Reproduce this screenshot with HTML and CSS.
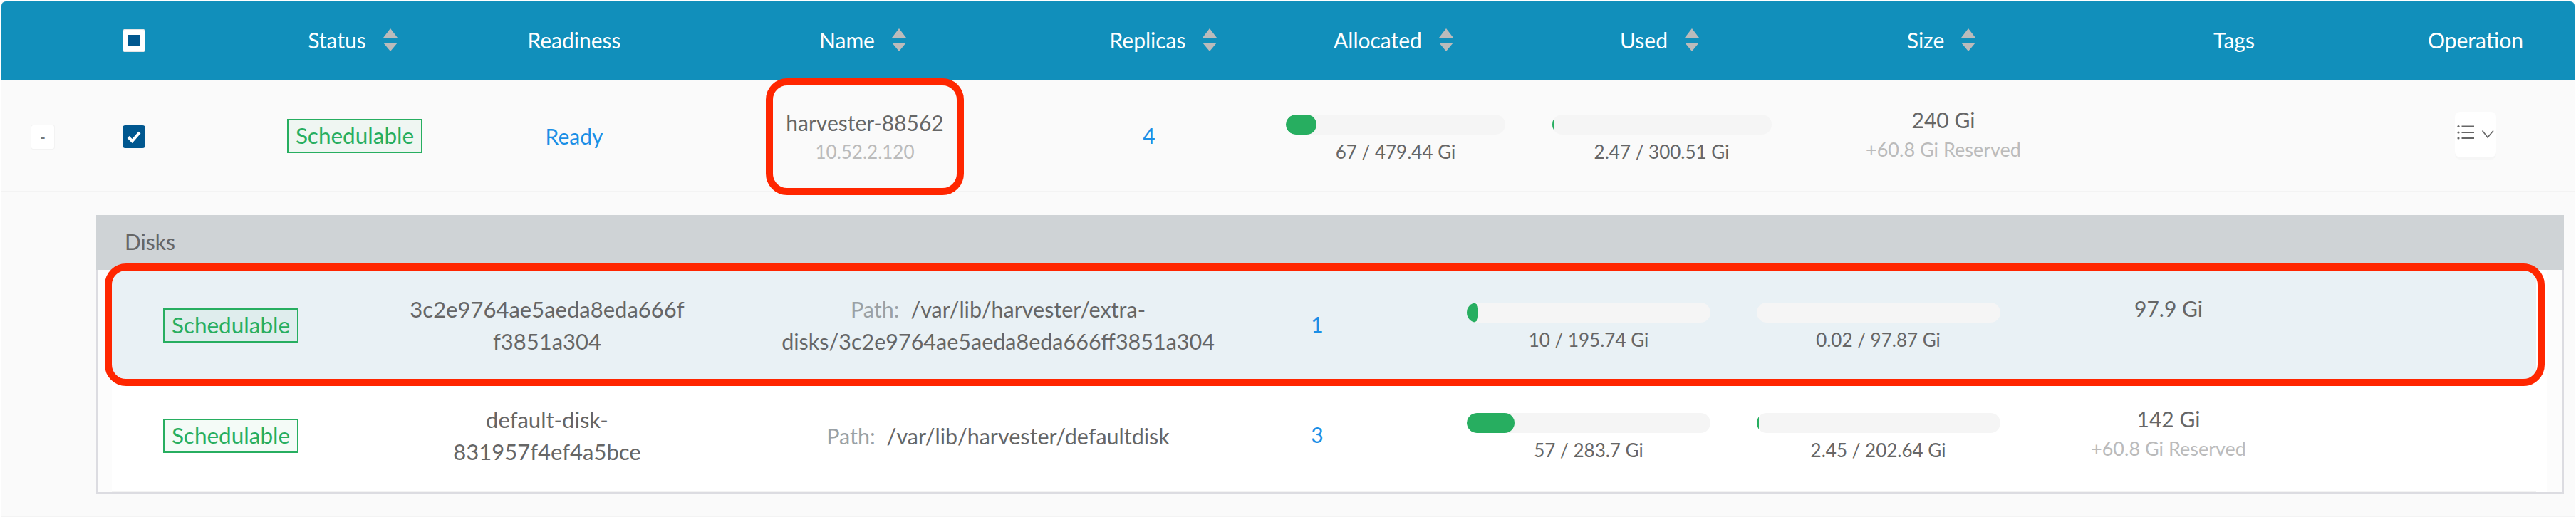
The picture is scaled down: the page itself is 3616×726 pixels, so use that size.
FILE: index.html
```html
<!DOCTYPE html>
<html lang="en">
<head>
<meta charset="utf-8">
<title>Hosts</title>
<link rel="stylesheet" href="styles.css">
</head>
<body>
<div class="page">
  <div class="sheet">
  <div class="head grid-main">
    <div class="lead"><span class="check check-head"><span class="check-dot"></span></span></div>
    <div class="th sortable">Status <svg class="sort" viewBox="0 0 20 32"><path d="M10 0 20 13H0zM0 20h20L10 32z"/></svg></div>
    <div class="th">Readiness</div>
    <div class="th sortable">Name <svg class="sort" viewBox="0 0 20 32"><path d="M10 0 20 13H0zM0 20h20L10 32z"/></svg></div>
    <div class="th sortable th-replicas">Replicas <svg class="sort" viewBox="0 0 20 32"><path d="M10 0 20 13H0zM0 20h20L10 32z"/></svg></div>
    <div class="th sortable">Allocated <svg class="sort" viewBox="0 0 20 32"><path d="M10 0 20 13H0zM0 20h20L10 32z"/></svg></div>
    <div class="th sortable">Used <svg class="sort" viewBox="0 0 20 32"><path d="M10 0 20 13H0zM0 20h20L10 32z"/></svg></div>
    <div class="th sortable">Size <svg class="sort" viewBox="0 0 20 32"><path d="M10 0 20 13H0zM0 20h20L10 32z"/></svg></div>
    <div class="th">Tags</div>
    <div class="th">Operation</div>
  </div>

  <div class="host grid-main">
    <div class="lead lead-row">
      <span class="expander">-</span>
      <span class="check check-on"><svg viewBox="0 0 32 32"><path d="M8 16.5 13.5 22 24 10" fill="none" stroke="#fff" stroke-width="4"/></svg></span>
    </div>
    <div class="cell"><span class="tag">Schedulable</span></div>
    <div class="cell link">Ready</div>
    <div class="cell stack stack-name"><div>harvester-88562</div><div class="sub sub-ip">10.52.2.120</div></div>
    <div class="cell link cell-replicas">4</div>
    <div class="cell meter meter-host">
      <div class="bar bar-host"><span class="fill fill-a"></span></div>
      <div class="cap">67 / 479.44 Gi</div>
    </div>
    <div class="cell meter meter-host">
      <div class="bar bar-host"><span class="fill fill-thin"></span></div>
      <div class="cap">2.47 / 300.51 Gi</div>
    </div>
    <div class="cell stack stack-size"><div>240 Gi</div><div class="sub">+60.8 Gi Reserved</div></div>
    <div class="cell"></div>
    <div class="cell">
      <button class="op" type="button" aria-label="Operation">
        <svg viewBox="0 0 58 64"><g fill="#666"><circle cx="5" cy="20.5" r="1.6"/><circle cx="5" cy="29" r="1.6"/><circle cx="5" cy="37" r="1.6"/></g><path d="M9.500 20.500H27M9.500 29H27M9.500 37H27" stroke="#666" stroke-width="2.200"/><path d="M38.500 26.500 46 36 54 26.500" fill="none" stroke="#666" stroke-width="1.600"/></svg>
      </button>
    </div>
  </div>

  <div class="disks">
    <div class="disks-title">Disks</div>
    <div class="disks-body">
      <div class="disk-list">
        <div class="disk grid-disk disk-active">
          <div class="cell"><span class="tag tag-disk">Schedulable</span></div>
          <div class="cell"><div class="disk-name">3c2e9764ae5aeda8eda666f<br>f3851a304</div></div>
          <div class="cell path"><div><span class="path-label">Path:</span>/var/lib/harvester/extra-<br>disks/3c2e9764ae5aeda8eda666ff3851a304</div></div>
          <div class="cell link count">1</div>
          <div class="cell meter meter-alloc">
            <div class="bar bar-disk"><span class="fill fill-b"></span></div>
            <div class="cap">10 / 195.74 Gi</div>
          </div>
          <div class="cell meter">
            <div class="bar bar-disk"></div>
            <div class="cap">0.02 / 97.87 Gi</div>
          </div>
          <div class="cell stack stack-disk"><div>97.9 Gi</div></div>
        </div>
        <div class="disk grid-disk">
          <div class="cell"><span class="tag tag-disk">Schedulable</span></div>
          <div class="cell"><div class="disk-name">default-disk-<br>831957f4ef4a5bce</div></div>
          <div class="cell path"><div><span class="path-label">Path:</span>/var/lib/harvester/defaultdisk</div></div>
          <div class="cell link count">3</div>
          <div class="cell meter meter-alloc">
            <div class="bar bar-disk"><span class="fill fill-c"></span></div>
            <div class="cap">57 / 283.7 Gi</div>
          </div>
          <div class="cell meter">
            <div class="bar bar-disk"><span class="fill fill-thin"></span></div>
            <div class="cap">2.45 / 202.64 Gi</div>
          </div>
          <div class="cell stack stack-disk"><div>142 Gi</div><div class="sub">+60.8 Gi Reserved</div></div>
        </div>
      </div>
    </div>
  </div>
  </div>

  <div class="mark mark-name"></div>
  <div class="mark mark-disk"></div>
</div>
</body>
</html>
```

FILE: styles.css
```css
* { box-sizing: border-box; }
html, body { margin: 0; background: #fff; }
body {
  font-family: "Lato", "Liberation Sans", sans-serif;
  font-size: 30px;
  color: #666;
}
.page {
  position: relative;
  width: 3616px;
  height: 726px;
  padding: 2px 2px 0;
  overflow: hidden;
}
.sheet {
  height: 724px;
  background: #fafafa;
  border-bottom: 1px solid #f3f3f3;
}
.grid-main {
  display: grid;
  grid-template-columns: 386px 220px 396px 420px 378px 314px 433px 358px 458px 220px 29px;
}
.head {
  height: 111px;
  background: #118fbb;
  color: #fff;
  border-radius: 6px 6px 0 0;
  align-items: center;
}
.th {
  display: flex;
  align-items: center;
  justify-content: center;
  white-space: nowrap;
  padding-bottom: 4px;
}
.sortable { gap: 24px; padding-right: 6px; }
.th-replicas { padding-left: 40px; padding-right: 0; }
.sort { width: 20px; height: 32px; fill: #bbb; margin-top: 1px; }
.lead {
  display: flex;
  align-items: center;
  padding-left: 42px;
}
.check {
  display: block;
  width: 32px;
  height: 32px;
  border-radius: 4px;
  margin-left: 128px;
}
.check-head {
  background: #fff;
  box-shadow: inset 0 0 0 1px #e4e4e4;
  display: flex;
  align-items: center;
  justify-content: center;
  margin-bottom: 2px;
}
.check-dot { width: 16px; height: 16px; background: #00578f; }
.check-on { background: #00578f; margin-left: 96px; }
.check-on svg { display: block; width: 32px; height: 32px; }
.lead-row { padding-top: 3px; }
.expander {
  width: 32px;
  height: 33px;
  background: #fff;
  box-shadow: 0 0 0 1px #f3f3f3;
  border-radius: 3px;
  display: flex;
  align-items: center;
  justify-content: center;
  font-size: 20px;
  font-weight: 700;
  color: #777;
}
.host {
  height: 157px;
  background: #fafafa;
  border-bottom: 2px solid #f3f3f3;
  align-items: center;
}
.cell {
  display: flex;
  align-items: center;
  justify-content: center;
  text-align: center;
  min-width: 0;
}
.tag {
  display: block;
  width: 190px;
  height: 48px;
  line-height: 42px;
  font-size: 31.500px;
  text-align: center;
  border: 2px solid #27ae60;
  background: #eff6f2;
  color: #27ae60;
  white-space: nowrap;
}
.tag-disk { background: rgba(39, 174, 96, 0.05); }
.link { color: #1b8fe6; }
.cell-replicas { padding-bottom: 2px; }
.stack { flex-direction: column; line-height: 41px; }
.stack-name { padding-top: 4px; }
.stack-size { padding-bottom: 4px; }
.sub { font-size: 27px; color: #bbb; }
.sub-ip { font-size: 26px; }
.stack-disk { align-self: center; justify-content: flex-start; height: 84px; margin-top: -5px; }
.meter { flex-direction: column; }
.meter-host { padding-top: 5px; }
.bar {
  height: 28px;
  background: #f5f5f5;
  border-radius: 14px;
  overflow: hidden;
}
.bar-host { width: 308px; }
.bar-disk { width: 342px; }
.fill { display: block; height: 100%; background: #27ae60; border-radius: 14px; }
.fill-a { width: 43px; }
.fill-b { width: 16px; }
.fill-c { width: 67px; }
.fill-thin { width: 3px; }
.cap { margin-top: 12px; font-size: 26px; line-height: 24px; white-space: nowrap; }
.op {
  display: block;
  width: 58px;
  height: 64px;
  padding: 0;
  border: 0;
  background: #fff;
  border-radius: 8px;
  box-shadow: 0 3px 0 #f6f6f6;
  margin-top: -3px;
}
.op svg { display: block; width: 58px; height: 64px; }
.disks {
  margin: 32px 15px 0 133px;
  border: solid #dcdce1;
  border-width: 0 3px 2px;
}
.disks-title {
  height: 77px;
  margin: 0 -3px;
  padding-left: 40px;
  background: #cfd3d6;
  line-height: 74px;
}
.disks-body {
  background: #fcfcfc;
  padding: 0 21px 0 19px;
}
.disk-list {
  background: #fff;
  padding-right: 15px;
}
.grid-disk {
  display: grid;
  grid-template-columns: 334px 554px 712px 184px 479px 433px 382px 1fr;
  align-items: center;
  height: 156px;
  line-height: 45px;
}
.disk:last-child { border-bottom: 2px solid #f3f3f3; }
.disk-active { background: #e9f1f5; }
.disk-name { font-size: 31px; white-space: nowrap; }
.path { font-size: 30.500px; white-space: nowrap; }
.path-label { color: #9aa1a5; margin-right: 16px; }
.count { padding-bottom: 4px; }
.meter-alloc { padding-left: 99px; }
.mark {
  position: absolute;
  border: 10px solid #ff2600;
  border-radius: 30px;
  pointer-events: none;
}
.mark-name { left: 1075px; top: 110px; width: 278px; height: 164px; }
.mark-disk { left: 147px; top: 370px; width: 3425px; height: 172px; }
```
